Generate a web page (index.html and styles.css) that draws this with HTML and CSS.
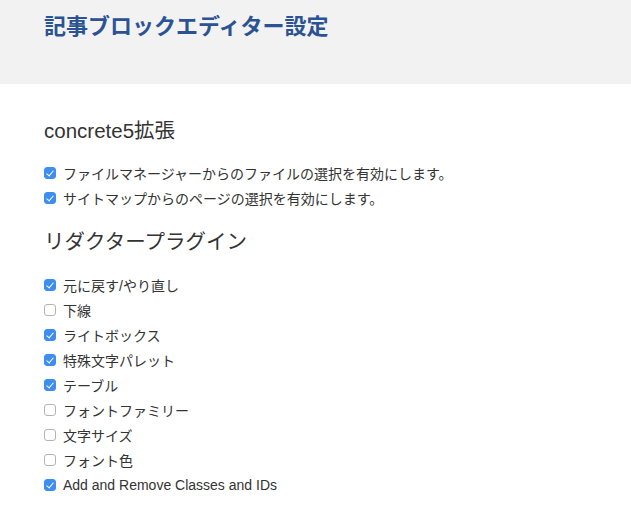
FILE: index.html
```html
<!DOCTYPE html>
<html lang="ja">
<head>
  <meta charset="UTF-8">
  <title>記事ブロックエディター設定</title>
  <link rel="stylesheet" href="styles.css">
</head>
<body>

<div class="page-header">
  <h1>記事ブロックエディター設定</h1>
</div>

<div class="page-body">
  <h3>concrete5拡張</h3>
  <ul class="options">
    <li><label><input type="checkbox" checked> ファイルマネージャーからのファイルの選択を有効にします。</label></li>
    <li><label><input type="checkbox" checked> サイトマップからのページの選択を有効にします。</label></li>
  </ul>

  <h3 class="plugins-title">リダクタープラグイン</h3>
  <ul class="options">
    <li><label><input type="checkbox" checked> 元に戻す/やり直し</label></li>
    <li><label><input type="checkbox"> 下線</label></li>
    <li><label><input type="checkbox" checked> ライトボックス</label></li>
    <li><label><input type="checkbox" checked> 特殊文字パレット</label></li>
    <li><label><input type="checkbox" checked> テーブル</label></li>
    <li><label><input type="checkbox"> フォントファミリー</label></li>
    <li><label><input type="checkbox"> 文字サイズ</label></li>
    <li><label><input type="checkbox"> フォント色</label></li>
    <li><label><input type="checkbox" checked> Add and Remove Classes and IDs</label></li>
  </ul>
</div>

</body>
</html>
```

FILE: styles.css
```css
body {
  margin: 0;
  font-family: "Liberation Sans", Arial, "Noto Sans CJK JP", sans-serif;
  color: #333;
  background: #fff;
}
.page-header {
  background-color: #f2f2f2;
  height: 84px;
  padding: 13px 44px 0;
  box-sizing: border-box;
}
.page-header h1 {
  margin: 0;
  font-size: 22px;
  line-height: 28px;
  font-weight: bold;
  color: #2b5394;
}
.page-body {
  padding: 33px 44px 0;
}
.page-body h3 {
  margin: 0 0 15px;
  font-size: 20.5px;
  line-height: 28px;
  font-weight: normal;
  color: #333;
}
.page-body .plugins-title {
  margin-bottom: 16px;
}
.options {
  list-style: none;
  margin: 0 0 18px;
  padding: 0;
}
.options li {
  height: 25px;
  display: flex;
  align-items: center;
  font-size: 14px;
}
.options label {
  display: flex;
  align-items: center;
  gap: 7px;
}
.options input {
  appearance: none;
  -webkit-appearance: none;
  margin: 0;
  width: 12px;
  height: 12px;
  border: 1px solid #b5b5b5;
  border-radius: 3px;
  background: #fff;
  box-sizing: border-box;
  position: relative;
}
.options input:checked {
  background: #3d8ef0;
  border-color: #3d8ef0;
}
.options input:checked::after {
  content: "";
  position: absolute;
  left: 3px;
  top: 1px;
  width: 3px;
  height: 6px;
  border: solid #fff;
  border-width: 0 1.5px 1.5px 0;
  transform: rotate(40deg);
}
```
